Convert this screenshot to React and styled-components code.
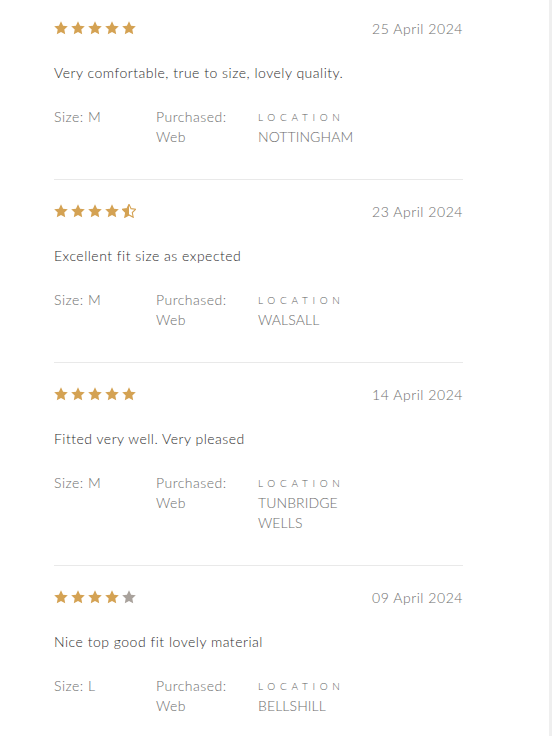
import React from "react";
import styled, { createGlobalStyle } from "styled-components";

const reviews = [
  {
    rating: 5,
    date: "25 April 2024",
    text: "Very comfortable, true to size, lovely quality.",
    size: "M",
    purchased: "Web",
    location: "NOTTINGHAM",
  },
  {
    rating: 4.5,
    date: "23 April 2024",
    text: "Excellent fit size as expected",
    size: "M",
    purchased: "Web",
    location: "WALSALL",
  },
  {
    rating: 5,
    date: "14 April 2024",
    text: "Fitted very well. Very pleased",
    size: "M",
    purchased: "Web",
    location: "TUNBRIDGE WELLS",
  },
  {
    rating: 4,
    date: "09 April 2024",
    text: "Nice top good fit lovely material",
    size: "L",
    purchased: "Web",
    location: "BELLSHILL",
  },
];

// chunky five-point star, 14x14 box
const STAR =
  "M7 0.3l2.05 4.35 4.75 0.6-3.5 3.3 0.9 4.75L7 11l-4.2 2.3 0.9-4.75-3.5-3.3 4.75-0.6z";

const Star = ({ fill }) => (
  <StarIcon viewBox="0 0 14 14">
    {fill === "half" ? (
      <>
        <defs>
          <clipPath id="left-half">
            <rect x="0" y="0" width="7" height="14" />
          </clipPath>
        </defs>
        <path d={STAR} fill="none" stroke="#d4a253" strokeWidth="1.1" />
        <path d={STAR} fill="#d4a253" clipPath="url(#left-half)" />
      </>
    ) : (
      <path d={STAR} fill={fill === "full" ? "#d4a253" : "#a9a29c"} />
    )}
  </StarIcon>
);

const Stars = ({ rating }) => (
  <StarRow>
    {[1, 2, 3, 4, 5].map((n) => (
      <Star
        key={n}
        fill={rating >= n ? "full" : rating >= n - 0.5 ? "half" : "empty"}
      />
    ))}
  </StarRow>
);

const App = () => {
  return (
    <>
      <GlobalStyle />
      <Page>
        <List>
          {reviews.map((r, i) => (
            <Review key={i}>
              <Header>
                <Stars rating={r.rating} />
                <DateText>{r.date}</DateText>
              </Header>
              <Body>{r.text}</Body>
              <Details>
                <Cell>Size: {r.size}</Cell>
                <Cell>
                  Purchased:
                  <br />
                  {r.purchased}
                </Cell>
                <Cell>
                  <Label>Location</Label>
                  <Place>{r.location}</Place>
                </Cell>
              </Details>
            </Review>
          ))}
        </List>
      </Page>
    </>
  );
};

export default App;

const GlobalStyle = createGlobalStyle`
  html, body {
    margin: 0;
    padding: 0;
    background: #fff;
  }
  body {
    font-family: Lato, "Liberation Sans", sans-serif;
    -webkit-font-smoothing: antialiased;
  }
`;

const Page = styled.div`
  width: 549px;
  height: 736px;
  overflow: hidden;
  border-right: 3px solid #efefef;
`;

const List = styled.div`
  width: 409px;
  margin-left: 54px;
`;

const Review = styled.div`
  padding: 21px 0 32px;
  border-bottom: 1px solid #e9e9e9;
  &:first-child {
    padding-top: 18px;
  }
`;

const Header = styled.div`
  display: flex;
  justify-content: space-between;
  align-items: center;
  height: 20px;
`;

const StarRow = styled.div`
  display: flex;
  gap: 3px;
`;

const StarIcon = styled.svg`
  width: 14px;
  height: 14px;
  display: block;
`;

const DateText = styled.span`
  font-size: 14px;
  font-weight: 300;
  color: #6e6e6e;
  letter-spacing: 0.55px;
`;

const Body = styled.p`
  margin: 25px 0 0;
  font-size: 14px;
  font-weight: 300;
  line-height: 20px;
  color: #2e2e2e;
  letter-spacing: 0.5px;
`;

const Details = styled.div`
  display: grid;
  grid-template-columns: 102px 102px 102px;
  margin-top: 24px;
  font-size: 14px;
  font-weight: 300;
  line-height: 20px;
  color: #6e6e6e;
  letter-spacing: 0.5px;
`;

const Cell = styled.div``;

const Label = styled.div`
  font-size: 10px;
  font-weight: 300;
  letter-spacing: 4.7px;
  text-transform: uppercase;
  color: #5e5e5e;
`;

const Place = styled.div`
  letter-spacing: 0.1px;
`;
